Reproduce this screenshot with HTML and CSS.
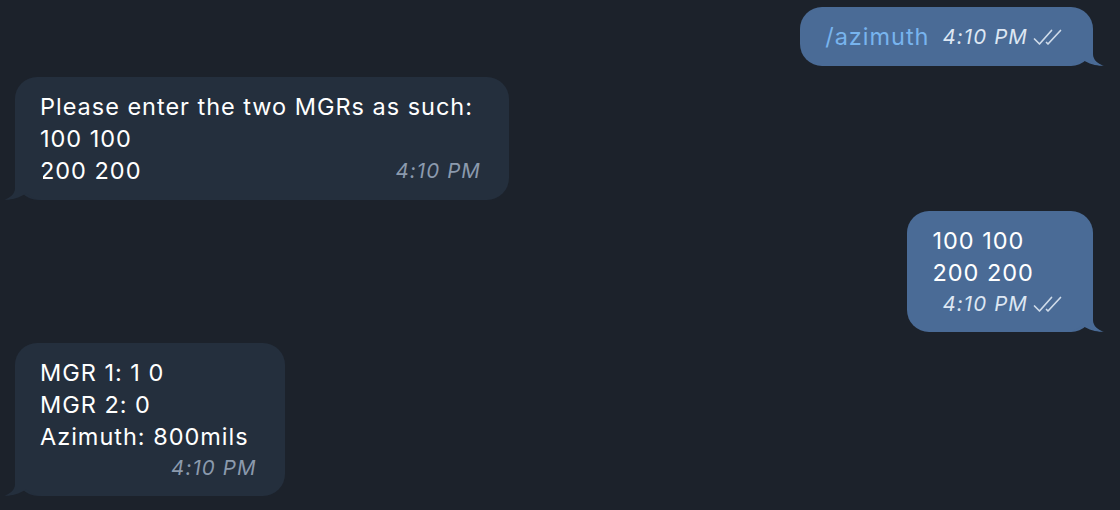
FILE: index.html
```html
<!DOCTYPE html>
<html>
<head>
<meta charset="utf-8">
<link rel="stylesheet" href="styles.css">
</head>
<body>
<div class="chat">
  <div class="msg out">
    <div class="bubble one-line">
      <span class="text link">/azimuth</span>
      <span class="meta"><span class="time">4:10 PM</span><svg class="checks" viewBox="0 0 30 17" width="30" height="17"><path d="M1.5 10 L6.5 15 L18.5 1.5" /><path d="M13.5 13.5 L15 15 L27.5 1.5" /></svg></span>
    </div>
    <svg class="tail" viewBox="0 0 40 26" width="40" height="26"><path d="M12 0 L12 14 C12 20 7 24 1 25.6 C7 26.2 15 24.5 23 19.5 C29 24 34 26 40 26 L40 0 Z"/></svg>
  </div>

  <div class="msg in">
    <div class="bubble">
      <div class="text">Please enter the two MGRs as such:<br>100 100<br>200 200</div>
      <span class="meta overlay"><span class="time">4:10 PM</span></span>
    </div>
    <svg class="tail" viewBox="0 0 40 26" width="40" height="26"><path d="M12 0 L12 14 C12 20 7 24 1 25.6 C7 26.2 15 24.5 23 19.5 C29 24 34 26 40 26 L40 0 Z"/></svg>
  </div>

  <div class="msg out">
    <div class="bubble">
      <div class="text">100 100<br>200 200</div>
      <span class="meta row"><span class="time">4:10 PM</span><svg class="checks" viewBox="0 0 30 17" width="30" height="17"><path d="M1.5 10 L6.5 15 L18.5 1.5" /><path d="M13.5 13.5 L15 15 L27.5 1.5" /></svg></span>
    </div>
    <svg class="tail" viewBox="0 0 40 26" width="40" height="26"><path d="M12 0 L12 14 C12 20 7 24 1 25.6 C7 26.2 15 24.5 23 19.5 C29 24 34 26 40 26 L40 0 Z"/></svg>
  </div>

  <div class="msg in">
    <div class="bubble">
      <div class="text">MGR 1: 1 0<br>MGR 2: 0<br>Azimuth: 800mils</div>
      <span class="meta row"><span class="time">4:10 PM</span></span>
    </div>
    <svg class="tail" viewBox="0 0 40 26" width="40" height="26"><path d="M12 0 L12 14 C12 20 7 24 1 25.6 C7 26.2 15 24.5 23 19.5 C29 24 34 26 40 26 L40 0 Z"/></svg>
  </div>
</div>
</body>
</html>
```

FILE: styles.css
```css
* { box-sizing: border-box; }

html, body {
  margin: 0;
  background: #1c222b;
}

body {
  width: 1120px;
  height: 510px;
  overflow: hidden;
  font-family: Inter, "Noto Sans", sans-serif;
  color: #ffffff;
}

.chat {
  display: flex;
  flex-direction: column;
  gap: 11px;
  padding: 7px 27px 0 15px;
}

.msg {
  position: relative;
  display: flex;
}

.msg.out { justify-content: flex-end; }
.msg.in { justify-content: flex-start; }

.bubble {
  display: grid;
  border-radius: 22px;
  padding: 14px 28px 13px 25px;
  font-size: 23.5px;
  line-height: 32px;
}

.in .bubble {
  background: #242f3d;
  border-bottom-left-radius: 24px;
}

.out .bubble {
  background: #4a6b96;
  padding-right: 30px;
}

.text {
  grid-area: 1 / 1;
  padding-right: 8px;
  letter-spacing: 0.98px;
}

.link { color: #78b4ee; }

.meta {
  display: flex;
  align-items: center;
  font-style: italic;
  font-size: 20.5px;
  letter-spacing: 1.1px;
  white-space: nowrap;
}

.in .meta { color: #8b9aad; }
.out .meta { color: #dde7f3; }

.meta.overlay {
  grid-area: 1 / 1;
  justify-self: end;
  align-self: end;
}

.meta.row {
  grid-area: 2 / 1;
  justify-self: end;
  margin-left: 10px;
  line-height: 30px;
}

.bubble.one-line {
  display: flex;
  align-items: center;
}

.bubble.one-line .text { padding-right: 0; }
.bubble.one-line .meta { margin-left: 13px; }

.checks {
  margin-left: 5px;
  fill: none;
  stroke: #cfdbe9;
  stroke-width: 1.7;
  stroke-linecap: round;
  stroke-linejoin: round;
}

.tail {
  position: absolute;
  bottom: 0;
}

.in .tail {
  left: -12px;
  fill: #242f3d;
}

.out .tail {
  right: -12px;
  transform: scaleX(-1);
  fill: #4a6b96;
}
```
